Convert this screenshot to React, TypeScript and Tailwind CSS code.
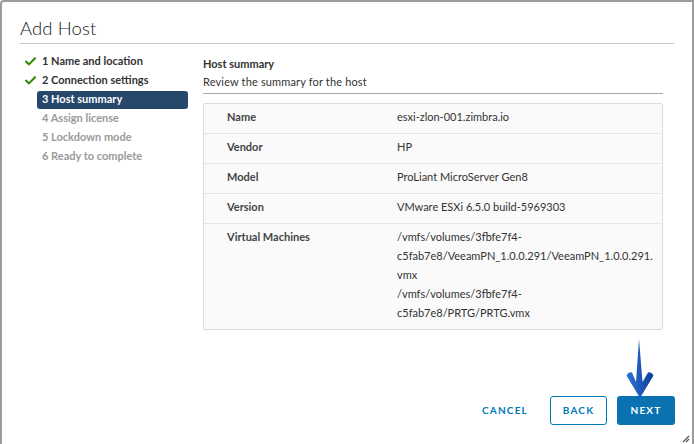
import React from "react";

const Check = () => (
  <svg width="11" height="9" viewBox="0 0 11 9" className="block">
    <path d="M1 4.6 L4 7.4 L10 1.2" fill="none" stroke="#2f8400" strokeWidth="2" strokeLinecap="round" strokeLinejoin="round" />
  </svg>
);

const steps = [
  { label: "1 Name and location", state: "done" },
  { label: "2 Connection settings", state: "done" },
  { label: "3 Host summary", state: "active" },
  { label: "4 Assign license", state: "todo" },
  { label: "5 Lockdown mode", state: "todo" },
  { label: "6 Ready to complete", state: "todo" },
];

const rows: { k: string; v: string[] }[] = [
  { k: "Name", v: ["esxi-zlon-001.zimbra.io"] },
  { k: "Vendor", v: ["HP"] },
  { k: "Model", v: ["ProLiant MicroServer Gen8"] },
  { k: "Version", v: ["VMware ESXi 6.5.0 build-5969303"] },
  {
    k: "Virtual Machines",
    v: [
      "/vmfs/volumes/3fbfe7f4-",
      "c5fab7e8/VeeamPN_1.0.0.291/VeeamPN_1.0.0.291.",
      "vmx",
      "/vmfs/volumes/3fbfe7f4-",
      "c5fab7e8/PRTG/PRTG.vmx",
    ],
  },
];

export default function App() {
  return (
    <div
      className="relative w-[694px] h-[444px] overflow-hidden bg-white border-t-2 border-l-2 border-r-2 border-[#9c9c9c] rounded-tl-[4px] text-[#333]"
      style={{ fontFamily: "Lato, 'Open Sans', sans-serif" }}
    >
      {/* header */}
      <div className="mx-[18px] h-[42px] border-b border-[#c8c8c8] flex items-end pb-[1px]">
        <h1 className="text-[18.5px] leading-[28px] font-light text-[#1a1a1a] tracking-[0.1px]">Add Host</h1>
      </div>

      <div className="flex ml-[18px] mr-[29px] mt-[8px]">
        {/* nav */}
        <nav className="w-[168px] flex flex-col">
          {steps.map((s) => (
            <div key={s.label} className="flex items-center h-[19px]">
              <div className="w-[17px] flex justify-end pr-[1px]">
                {s.state === "done" ? <Check /> : null}
              </div>
              <div
                className={
                  "flex-1 h-[18px] flex items-center pl-[5px] rounded-[3px] text-[11px] font-bold " +
                  (s.state === "active"
                    ? "bg-[#27476b] text-white"
                    : s.state === "done"
                    ? "text-[#333]"
                    : "text-[#9a9a9a]")
                }
              >
                {s.label}
              </div>
            </div>
          ))}
        </nav>

        {/* content */}
        <div className="ml-[15px] flex-1 flex flex-col">
          <div className="text-[11px] font-bold leading-[17px] mt-[3px] text-[#333]">Host summary</div>
          <div className="text-[11px] leading-[17px] mt-[1px] text-[#333] tracking-[0.15px]">Review the summary for the host</div>
          <div className="border-b border-[#a8a8a8] mt-[3px]" />
          <div className="mt-[9px] bg-[#fafafa] border border-[#dcdcdc] rounded-[2px]">
            {rows.map((r, i) => (
              <div
                key={r.k}
                className={"flex pt-[3px] pb-[7px] text-[11px] leading-[19px] " + (i > 0 ? "border-t border-[#e6e6e6]" : "")}
              >
                <div className="w-[193px] pl-[23px] font-bold text-[#444]">{r.k}</div>
                <div className="flex-1 text-[#333]">
                  {r.v.map((line, j) => (
                    <div key={j}>{line}</div>
                  ))}
                </div>
              </div>
            ))}
          </div>
        </div>
      </div>

      {/* footer buttons */}
      <div className="absolute right-[17px] bottom-[19px] flex items-center gap-[10px]">
        <button className="h-[29px] px-[12px] text-[10px] font-bold tracking-[0.12em] text-[#0079b8]">CANCEL</button>
        <button className="h-[29px] w-[57px] border border-[#0079b8] rounded-[3px] text-[10px] font-bold tracking-[0.12em] text-[#0079b8] bg-white">
          BACK
        </button>
        <button className="h-[29px] w-[58px] rounded-[3px] text-[10px] font-bold tracking-[0.12em] text-white bg-[#0a72b0]">
          NEXT
        </button>
      </div>

      {/* annotation arrow */}
      <svg className="absolute left-[620px] top-[335px]" width="34" height="62" viewBox="0 0 34 62">
        <defs>
          <linearGradient id="ag" x1="0" y1="0" x2="1" y2="0">
            <stop offset="0" stopColor="#2d74d8" />
            <stop offset="1" stopColor="#0f3f98" />
          </linearGradient>
        </defs>
        <path
          d="M17 2 L20.5 45 L26 35.5 Q29.5 34.5 31.5 38.5 L18 61 L4.5 38.5 Q6.5 34.5 10 35.5 L14 45 Z"
          fill="url(#ag)"
        />
      </svg>

      {/* resize grip */}
      <svg className="absolute right-[2px] bottom-[1px]" width="9" height="9" viewBox="0 0 9 9">
        <path d="M8 2 L2 8 M8 5 L5 8" stroke="#555" strokeWidth="1.2" />
      </svg>
    </div>
  );
}
